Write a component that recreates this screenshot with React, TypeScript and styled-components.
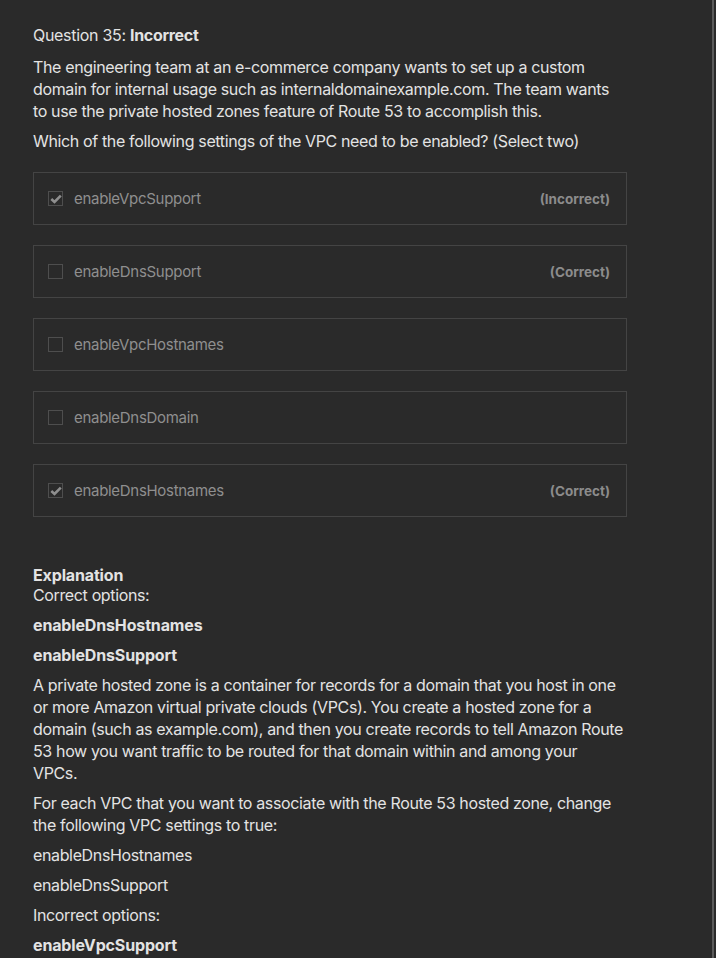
import React from "react";
import styled, { createGlobalStyle } from "styled-components";

const Global = createGlobalStyle`
  html, body { margin: 0; padding: 0; background: #2a2a2a; }
  body { font-family: Inter, "Noto Sans", "Liberation Sans", sans-serif; color: #e3e3e3; }
  * { box-sizing: border-box; }
`;

const Frame = styled.div`
  display: flex;
  width: 716px;
  height: 958px;
  overflow: hidden;
  background: #2a2a2a;
`;

const Content = styled.div`
  flex: 1;
  padding: 24px 0 0 33px;
`;

const ScrollRail = styled.div`
  width: 2px;
  margin-right: 2px;
  background: #5b5b5b;
  flex-shrink: 0;
`;

const Title = styled.div`
  font-size: 16px;
  line-height: 22px;
  letter-spacing: -0.3px;
  margin-bottom: 10px;
  b { font-weight: 700; }
`;

const Para = styled.p<{ $bold?: boolean }>`
  margin: 0 0 8px;
  width: 592px;
  font-size: 16px;
  line-height: 22px;
  letter-spacing: ${(p) => (p.$bold ? "-0.15px" : "-0.36px")};
  font-weight: ${(p) => (p.$bold ? 700 : 400)};
`;

const Options = styled.div`
  display: flex;
  flex-direction: column;
  gap: 20px;
  margin-top: 20px;
  width: 594px;
`;

const OptionBox = styled.div`
  display: flex;
  align-items: center;
  height: 53px;
  padding: 0 16px 0 14px;
  border: 1px solid #444444;
`;

const Check = styled.span`
  width: 15px;
  height: 15px;
  border: 1px solid #4e4e4e;
  display: flex;
  align-items: center;
  justify-content: center;
  margin-right: 11px;
  flex-shrink: 0;
`;

const OptionText = styled.span`
  font-size: 15px;
  letter-spacing: -0.3px;
  color: #8f8f8f;
  flex: 1;
`;

const Verdict = styled.span`
  font-size: 13.5px;
  font-weight: 700;
  color: #8c8c8c;
`;

const ExplHead = styled.div`
  margin-top: 49px;
  font-size: 16px;
  line-height: 18px;
  letter-spacing: -0.15px;
  font-weight: 700;
`;

const options = [
  { label: "enableVpcSupport", checked: true, verdict: "(Incorrect)" },
  { label: "enableDnsSupport", checked: false, verdict: "(Correct)" },
  { label: "enableVpcHostnames", checked: false, verdict: "" },
  { label: "enableDnsDomain", checked: false, verdict: "" },
  { label: "enableDnsHostnames", checked: true, verdict: "(Correct)" },
];

export default function App() {
  return (
    <>
      <Global />
      <Frame>
        <Content>
          <Title>
            Question 35: <b>Incorrect</b>
          </Title>
          <Para>
            The engineering team at an e-commerce company wants to set up a custom domain for internal
            usage such as internaldomainexample.com. The team wants to use the private hosted zones
            feature of Route 53 to accomplish this.
          </Para>
          <Para>Which of the following settings of the VPC need to be enabled? (Select two)</Para>
          <Options>
            {options.map((o) => (
              <OptionBox key={o.label}>
                <Check>
                  {o.checked && (
                    <svg width="12" height="10" viewBox="0 0 12 10">
                      <path d="M1.3 5 L4.5 8 L10.8 1.6" fill="none" stroke="#8f8f8f" strokeWidth="2.6" />
                    </svg>
                  )}
                </Check>
                <OptionText>{o.label}</OptionText>
                {o.verdict && <Verdict>{o.verdict}</Verdict>}
              </OptionBox>
            ))}
          </Options>
          <ExplHead>Explanation</ExplHead>
          <Para>Correct options:</Para>
          <Para $bold>enableDnsHostnames</Para>
          <Para $bold>enableDnsSupport</Para>
          <Para>
            A private hosted zone is a container for records for a domain that you host in one or more
            Amazon virtual private clouds (VPCs). You create a hosted zone for a domain (such as
            example.com), and then you create records to tell Amazon Route 53 how you want traffic to be
            routed for that domain within and among your VPCs.
          </Para>
          <Para>
            For each VPC that you want to associate with the Route 53 hosted zone, change the following
            VPC settings to true:
          </Para>
          <Para>enableDnsHostnames</Para>
          <Para>enableDnsSupport</Para>
          <Para>Incorrect options:</Para>
          <Para $bold>enableVpcSupport</Para>
        </Content>
        <ScrollRail />
      </Frame>
    </>
  );
}
